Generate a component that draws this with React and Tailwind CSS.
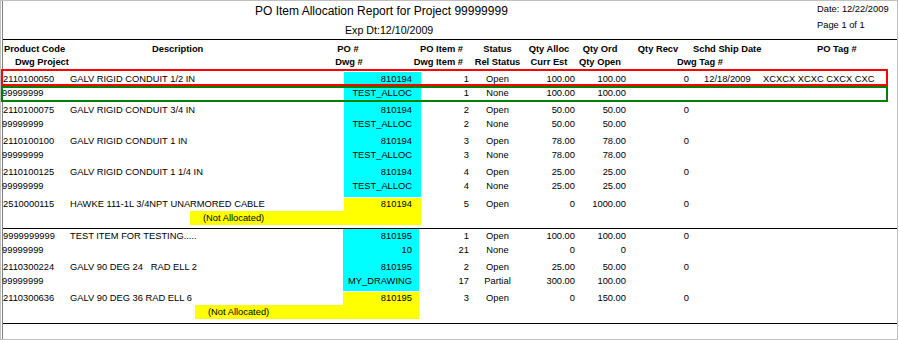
import React from "react";

const L = "h-[14px] leading-[14px] whitespace-pre";

function CyanGroup({ g, h, b2 }) {
  return (
    <div className={`flex shrink-0 ${h}`}>
      <div className="w-[67px] shrink-0">
        <div className={L}>{g.code}</div>
        <div className={`${L} -ml-px`}>{g.proj}</div>
      </div>
      <div className={`${b2 ? "w-[273px]" : "w-[274px]"} shrink-0`}>
        <div className={L}>{g.desc}</div>
      </div>
      <div className={`${b2 ? "w-[76px] pr-[7px]" : "w-[77px] pr-[9px]"} shrink-0 bg-[#00ffff] text-right`}>
        <div className={L}>{g.po}</div>
        <div className={L}>{g.dwg}</div>
      </div>
      <div className={`${b2 ? "w-[51px]" : "w-[49px]"} shrink-0 pr-px text-right`}>
        <div className={L}>{g.i1}</div>
        <div className={L}>{g.i2}</div>
      </div>
      <div className="w-[55px] shrink-0 text-center">
        <div className={L}>{g.s1}</div>
        <div className={L}>{g.s2}</div>
      </div>
      <div className="w-[50px] shrink-0 text-right">
        <div className={L}>{g.a1}</div>
        <div className={L}>{g.a2}</div>
      </div>
      <div className="w-[51px] shrink-0 text-right">
        <div className={L}>{g.o1}</div>
        <div className={L}>{g.o2}</div>
      </div>
      <div className="w-[63px] shrink-0 text-right">
        <div className={L}>{g.recv}</div>
      </div>
      <div className="w-[74px] shrink-0 pl-[15px]">
        <div className={L}>{g.ship || ""}</div>
      </div>
      <div className="flex-1">
        <div className={L}>{g.tag || ""}</div>
      </div>
    </div>
  );
}

function YellowGroup({ g, h, b2 }) {
  return (
    <div className={`flex flex-col shrink-0 pt-px ${h}`}>
      <div className="flex h-[13px] leading-[13px]">
        <div className="w-[67px] shrink-0">{g.code}</div>
        <div className={`${b2 ? "w-[273px]" : "w-[274px]"} shrink-0 whitespace-pre`}>{g.desc}</div>
        <div className={`${b2 ? "w-[76px] pr-[7px]" : "w-[77px] pr-[9px]"} shrink-0 bg-[#ffff00] text-right`}>{g.po}</div>
        <div className={`${b2 ? "w-[51px]" : "w-[49px]"} shrink-0 pr-px text-right`}>{g.i1}</div>
        <div className="w-[55px] shrink-0 text-center">{g.s1}</div>
        <div className="w-[50px] shrink-0 text-right">{g.a1}</div>
        <div className="w-[51px] shrink-0 text-right">{g.o1}</div>
        <div className="w-[63px] shrink-0 text-right">{g.recv}</div>
      </div>
      <div className="flex h-[14px] leading-[14px]">
        <div className={`${b2 ? "w-[192px]" : "w-[187px]"} shrink-0`} />
        <div className={`${b2 ? "w-[224px]" : "w-[231px]"} shrink-0 bg-[#ffff00] pl-[13px]`}>(Not Allocated)</div>
      </div>
    </div>
  );
}

export default function App() {
  const block1 = [
    { code: "2110100050", proj: "99999999", desc: "GALV RIGID CONDUIT 1/2 IN", po: "810194", dwg: "TEST_ALLOC", i1: "1", i2: "1", s1: "Open", s2: "None", a1: "100.00", a2: "100.00", o1: "100.00", o2: "100.00", recv: "0", ship: "12/18/2009", tag: "XCXCX XCXC CXCX CXC" },
    { code: "2110100075", proj: "99999999", desc: "GALV RIGID CONDUIT 3/4 IN", po: "810194", dwg: "TEST_ALLOC", i1: "2", i2: "2", s1: "Open", s2: "None", a1: "50.00", a2: "50.00", o1: "50.00", o2: "50.00", recv: "0" },
    { code: "2110100100", proj: "99999999", desc: "GALV RIGID CONDUIT 1 IN", po: "810194", dwg: "TEST_ALLOC", i1: "3", i2: "3", s1: "Open", s2: "None", a1: "78.00", a2: "78.00", o1: "78.00", o2: "78.00", recv: "0" },
    { code: "2110100125", proj: "99999999", desc: "GALV RIGID CONDUIT 1 1/4 IN", po: "810194", dwg: "TEST_ALLOC", i1: "4", i2: "4", s1: "Open", s2: "None", a1: "25.00", a2: "25.00", o1: "25.00", o2: "25.00", recv: "0" },
  ];
  const y1 = { code: "2510000115", desc: "HAWKE 111-1L 3/4NPT UNARMORED CABLE", po: "810194", i1: "5", s1: "Open", a1: "0", o1: "1000.00", recv: "0" };
  const block2 = [
    { code: "9999999999", proj: "99999999", desc: "TEST ITEM FOR TESTING.....", po: "810195", dwg: "10", i1: "1", i2: "21", s1: "Open", s2: "None", a1: "100.00", a2: "0", o1: "100.00", o2: "0", recv: "0" },
    { code: "2110300224", proj: "99999999", desc: "GALV 90 DEG 24   RAD ELL 2", po: "810195", dwg: "MY_DRAWING", i1: "2", i2: "17", s1: "Open", s2: "Partial", a1: "25.00", a2: "300.00", o1: "50.00", o2: "100.00", recv: "0" },
  ];
  const y2 = { code: "2110300636", desc: "GALV 90 DEG 36 RAD ELL 6", po: "810195", i1: "3", s1: "Open", a1: "0", o1: "150.00", recv: "0" };

  return (
    <div className="w-[899px] h-[340px] bg-white font-['Liberation_Sans',Arial,sans-serif] text-[9.33px] text-black overflow-hidden">
      <div className="relative w-[898px] h-[340px] border border-[#c0c0c0]">
        <div className="h-full ml-px border-l border-[#808080] flex flex-col">
          {/* Title area */}
          <div className="flex h-[38px] shrink-0">
            <div className="w-[814px] shrink-0 flex flex-col">
              <div className="pl-[252px] pt-[3px] text-[12px] leading-[14px] whitespace-nowrap">
                PO Item Allocation Report for Project 99999999
              </div>
              <div className="pl-[342px] mt-[6px] text-[10.67px] leading-[13px] whitespace-nowrap">
                Exp Dt:12/10/2009
              </div>
            </div>
            <div className="flex-1 flex flex-col pt-[2px]">
              <div className="leading-[13px] whitespace-nowrap">Date: 12/22/2009</div>
              <div className="leading-[13px] mt-[3px] whitespace-nowrap">Page 1 of 1</div>
            </div>
          </div>
          <div className="h-px bg-black shrink-0" />
          {/* Header */}
          <div className="h-[32px] shrink-0 pt-[3px] font-bold whitespace-nowrap">
            <div className="flex h-[13px] leading-[13px]">
              <div className="w-[149px] shrink-0 pl-px">Product Code</div>
              <div className="w-[168px] shrink-0">Description</div>
              <div className="w-[56px] shrink-0 text-center">PO #</div>
              <div className="w-[94px] shrink-0 pr-[7px] text-right">PO Item #</div>
              <div className="w-[55px] shrink-0 text-center">Status</div>
              <div className="w-[48px] shrink-0 text-center">Qty Alloc</div>
              <div className="w-[54px] shrink-0 text-center">Qty Ord</div>
              <div className="w-[62px] shrink-0 text-center">Qty Recv</div>
              <div className="w-[128px] shrink-0 pl-[4px]">Schd Ship Date</div>
              <div className="flex-1">PO Tag #</div>
            </div>
            <div className="flex h-[13px] leading-[13px]">
              <div className="w-[317px] shrink-0 pl-[12px]">Dwg Project</div>
              <div className="w-[58px] shrink-0 text-center">Dwg #</div>
              <div className="w-[92px] shrink-0 pr-[7px] text-right">Dwg Item #</div>
              <div className="w-[55px] shrink-0 text-center">Rel Status</div>
              <div className="w-[48px] shrink-0 text-center">Curr Est</div>
              <div className="w-[54px] shrink-0 text-center">Qty Open</div>
              <div className="w-[146px] shrink-0 text-center">Dwg Tag #</div>
            </div>
          </div>
          {/* Block 1 */}
          <CyanGroup g={block1[0]} h="h-[31px]" />
          <CyanGroup g={block1[1]} h="h-[31px]" />
          <CyanGroup g={block1[2]} h="h-[31px]" />
          <CyanGroup g={block1[3]} h="h-[32px]" />
          <YellowGroup g={y1} h="h-[31px]" />
          <div className="h-px bg-black shrink-0" />
          {/* Block 2 */}
          <CyanGroup g={block2[0]} h="h-[31px]" b2 />
          <CyanGroup g={block2[1]} h="h-[31px]" b2 />
          <YellowGroup g={y2} h="h-[32px]" b2 />
          <div className="h-px bg-black shrink-0" />
          <div className="flex-1" />
        </div>
        {/* Highlight boxes */}
        <div className="absolute left-0 top-[68px] w-[887px] h-[17px] border-2 border-[#ff0000]" />
        <div className="absolute left-0 top-[85px] w-[887px] h-[16px] border-2 border-[#008000]" />
      </div>
    </div>
  );
}
